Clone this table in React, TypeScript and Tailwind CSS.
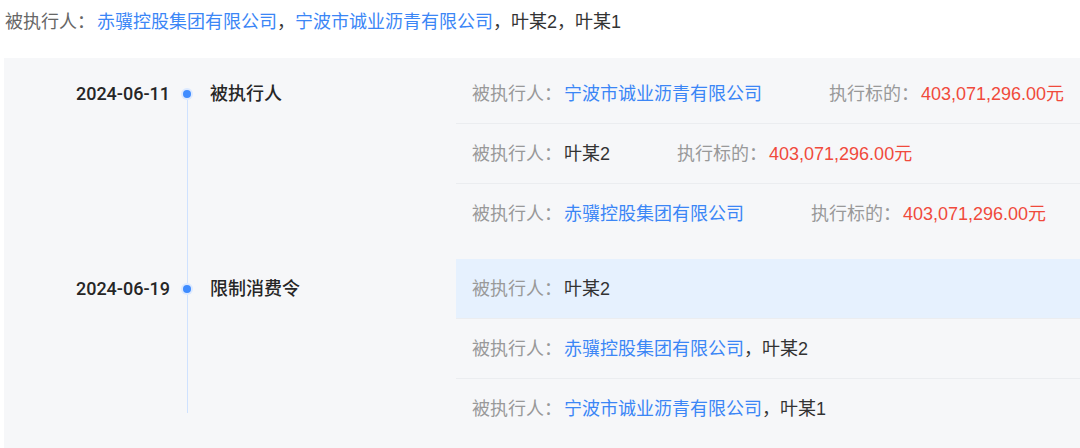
import React from "react";

type Person = { t: string; link?: boolean };
type Row = { persons: Person[]; amount?: string; highlight?: boolean };
type Group = { date: string; title: string; rows: Row[] };

const AMT = "403,071,296.00元";

const groups: Group[] = [
  {
    date: "2024-06-11",
    title: "被执行人",
    rows: [
      { persons: [{ t: "宁波市诚业沥青有限公司", link: true }], amount: AMT },
      { persons: [{ t: "叶某2" }], amount: AMT },
      { persons: [{ t: "赤骥控股集团有限公司", link: true }], amount: AMT },
    ],
  },
  {
    date: "2024-06-19",
    title: "限制消费令",
    rows: [
      { persons: [{ t: "叶某2" }], highlight: true },
      { persons: [{ t: "赤骥控股集团有限公司", link: true }, { t: "叶某2" }] },
      { persons: [{ t: "宁波市诚业沥青有限公司", link: true }, { t: "叶某1" }] },
    ],
  },
];

function Persons({ persons }: { persons: Person[] }) {
  return (
    <span>
      {persons.map((p, i) => (
        <React.Fragment key={i}>
          {i > 0 && <span className="text-[#333333]">，</span>}
          <span className={p.link ? "text-[#3b86f6]" : "text-[#333333]"}>{p.t}</span>
        </React.Fragment>
      ))}
    </span>
  );
}

export default function App() {
  return (
    <div className="w-[1080px] h-[448px] overflow-hidden bg-white font-['Liberation_Sans','Noto_Sans_CJK_SC',sans-serif] text-[18px]">
      <div className="h-[42px] pt-[1px] flex items-center pl-[5px] leading-[24px] whitespace-nowrap">
        <span className="text-[#666666]">被执行人：</span>
        <span className="ml-[2px]">
          <Persons
            persons={[
              { t: "赤骥控股集团有限公司", link: true },
              { t: "宁波市诚业沥青有限公司", link: true },
              { t: "叶某2" },
              { t: "叶某1" },
            ]}
          />
        </span>
      </div>
      <div className="mt-[16px] ml-[4px] bg-[#f6f7f9] h-[390px] pt-[6px]">
        {groups.map((g, gi) => {
          const last = gi === groups.length - 1;
          return (
            <div key={gi} className={`flex ${last ? "" : "pb-[15px]"}`}>
              <div className="w-[166px] h-[60px] flex items-center justify-end text-[#262626] font-['Roboto','Liberation_Sans',sans-serif] font-medium leading-[24px]">
                {g.date}
              </div>
              <div className="ml-[11px] w-[12px] flex flex-col items-center">
                <div className={`h-[24px] w-px ${gi === 0 ? "bg-transparent" : "bg-[#cfe2ff]"}`} />
                <div className="w-[12px] h-[12px] rounded-full bg-[#dce9ff] flex items-center justify-center">
                  <div className="w-[8px] h-[8px] rounded-full bg-[#3f8cff]" />
                </div>
                <div className={`flex-1 w-px bg-[#cfe2ff] ${last ? "mb-[26px]" : "-mb-[15px]"}`} />
              </div>
              <div className="ml-[17px] w-[246px] h-[60px] flex items-center text-[#262626] font-medium leading-[24px]">
                {g.title}
              </div>
              <div className="flex-1">
                {g.rows.map((r, ri) => (
                  <div
                    key={ri}
                    className={`h-[60px] flex items-center pl-[16px] leading-[24px] whitespace-nowrap ${
                      ri < g.rows.length - 1 ? "border-b border-[#ebedf0]" : ""
                    } ${r.highlight ? "bg-[#e6f1fe] border-[#e6f1fe]" : ""}`}
                  >
                    <span className="text-[#999999]">被执行人：</span>
                    <span className="ml-[2px]">
                      <Persons persons={r.persons} />
                    </span>
                    {r.amount && (
                      <>
                        <span className="ml-[67px] text-[#999999]">执行标的：</span>
                        <span className="ml-[2px] text-[#f04a3c]">{r.amount}</span>
                      </>
                    )}
                  </div>
                ))}
              </div>
            </div>
          );
        })}
      </div>
    </div>
  );
}
